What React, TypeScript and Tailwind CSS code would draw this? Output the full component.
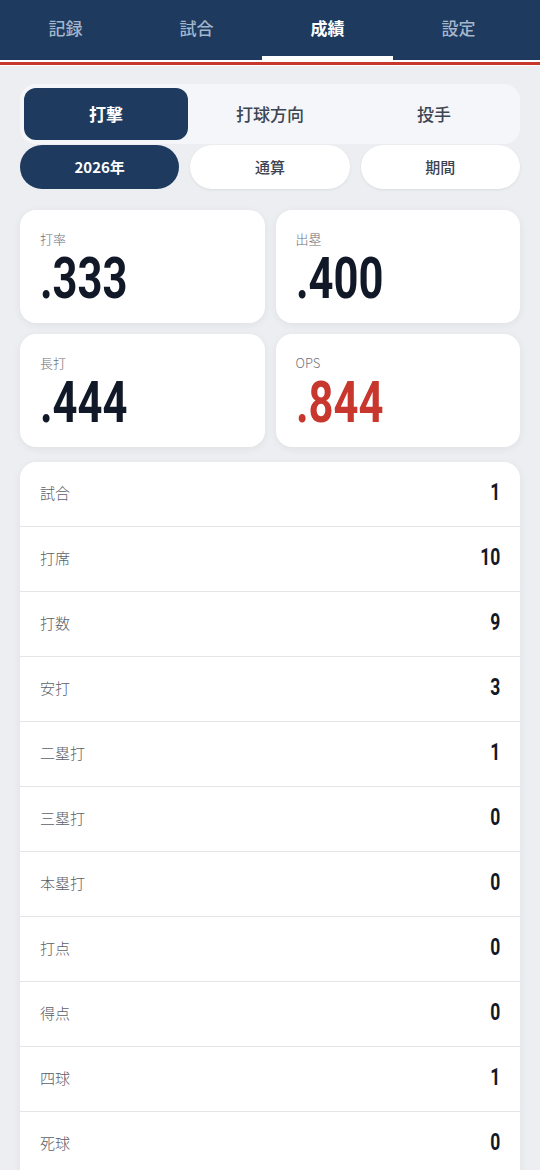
import React from 'react';

const jp = { fontFamily: '"Noto Sans CJK JP", "Noto Sans", sans-serif' };
const num = { fontFamily: 'Roboto, "Liberation Sans", sans-serif' };

const navTabs = ['記録', '試合', '成績', '設定'];

const summary = [
  { label: '打率', value: '.333' },
  { label: '出塁', value: '.400' },
  { label: '長打', value: '.444' },
  { label: 'OPS', value: '.844', red: true },
];

const rows: [string, string][] = [
  ['試合', '1'],
  ['打席', '10'],
  ['打数', '9'],
  ['安打', '3'],
  ['二塁打', '1'],
  ['三塁打', '0'],
  ['本塁打', '0'],
  ['打点', '0'],
  ['得点', '0'],
  ['四球', '1'],
  ['死球', '0'],
  ['三振', '2'],
  ['盗塁', '0'],
];

export default function App() {
  return (
    <div className="min-h-[1170px] bg-[#eceef1]" style={jp}>
      {/* top nav */}
      <div className="bg-[#1e3a5f]">
        <div className="grid w-[524px] grid-cols-4">
          {navTabs.map((t, i) => (
            <div key={t} className="flex h-[60px] flex-col items-center justify-end">
              <span
                className={`mb-[16px] text-[17px] ${i === 2 ? 'font-bold text-white' : 'font-medium text-[#a3b6cc]'}`}
              >
                {t}
              </span>
              <div className={`h-[4px] w-full ${i === 2 ? 'bg-white' : 'bg-transparent'}`} />
            </div>
          ))}
        </div>
      </div>
      <div className="h-[2px] bg-white" />
      <div className="h-[3px] bg-[#c8372d]" />
      <div className="h-[1px] bg-white" />

      <div className="px-5 pt-[18px]">
        {/* segment */}
        <div className="grid grid-cols-3 rounded-[16px] bg-[#f4f6f9] p-1">
          {['打撃', '打球方向', '投手'].map((t, i) => (
            <div
              key={t}
              className={`flex h-[52px] items-center justify-center rounded-[12px] text-[17px] ${
                i === 0 ? 'bg-[#1e3a5f] font-bold text-white' : 'font-medium text-[#3d4553]'
              }`}
            >
              {t}
            </div>
          ))}
        </div>

        {/* period pills */}
        <div className="mt-px grid grid-cols-3 gap-[11px]">
          {['2026年', '通算', '期間'].map((t, i) => (
            <div
              key={t}
              className={`flex h-[44px] items-center justify-center rounded-full text-[15px] ${
                i === 0
                  ? 'bg-[#1e3a5f] font-bold text-white'
                  : 'bg-white font-medium text-[#3d4553] shadow-[0_1px_3px_rgba(0,0,0,0.08)]'
              }`}
            >
              {t}
            </div>
          ))}
        </div>

        {/* summary cards */}
        <div className="mt-[21px] grid grid-cols-2 gap-[11px]">
          {summary.map((s) => (
            <div
              key={s.label}
              className="h-[113px] rounded-[16px] bg-white px-5 pt-[22px] shadow-[0_2px_8px_rgba(0,0,0,0.06)]"
            >
              <div className="text-[13px] font-light leading-none text-[#6b7078]">{s.label}</div>
              <div
                className={`mt-[4px] inline-block origin-left scale-x-[0.75] text-[58px] font-bold leading-none ${
                  s.red ? 'text-[#c8372d]' : 'text-[#111827]'
                }`}
                style={num}
              >
                {s.value}
              </div>
            </div>
          ))}
        </div>

        {/* detail list */}
        <div className="mt-[15px] overflow-hidden rounded-t-[16px] bg-white shadow-[0_2px_8px_rgba(0,0,0,0.06)]">
          {rows.map(([k, v]) => (
            <div
              key={k}
              className="flex h-[65px] items-center justify-between border-b border-[#e3e5e8] px-5 pb-[2px]"
            >
              <span className="text-[15px] font-light text-[#5b6068]">{k}</span>
              <span
                className="inline-block origin-right scale-x-[0.76] text-[23px] font-bold text-[#111827]"
                style={num}
              >
                {v}
              </span>
            </div>
          ))}
        </div>
      </div>
    </div>
  );
}
